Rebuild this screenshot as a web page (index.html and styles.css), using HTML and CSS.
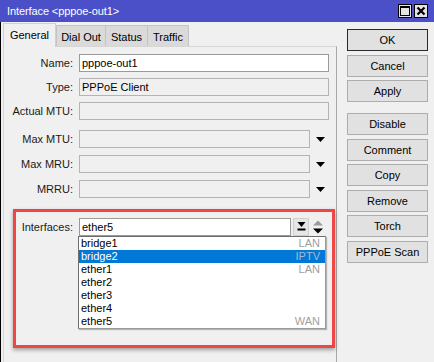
FILE: index.html
```html
<!DOCTYPE html>
<html lang="en">
<head>
    <meta charset="UTF-8">
    <title>Interface &lt;pppoe-out1&gt;</title>
    <link rel="stylesheet" href="styles.css">
</head>
<body>
    <div class="window">
        <div class="titlebar">
            <span class="title">Interface &lt;pppoe-out1&gt;</span>
            <div class="tb-buttons">
                <span class="tb-btn">
                    <svg width="10" height="10" viewBox="0 0 10 10"><rect x="0.5" y="0.5" width="9" height="9" fill="none" stroke="#000"/><rect x="0" y="0" width="10" height="2" fill="#000"/></svg>
                </span>
                <span class="tb-btn">
                    <svg width="10" height="10" viewBox="0 0 10 10"><path d="M1.5 1.5 L8.5 8.5 M8.5 1.5 L1.5 8.5" stroke="#000" stroke-width="2.2"/></svg>
                </span>
            </div>
        </div>
        <div class="content">
            <div class="left">
                <div class="tabs">
                    <div class="tab tab-general active">General</div>
                    <div class="tab tab-dial">Dial Out</div>
                    <div class="tab tab-status">Status</div>
                    <div class="tab tab-traffic">Traffic</div>
                </div>
                <div class="panel">
                    <div class="group">
                        <div class="row">
                            <span class="label">Name:</span>
                            <div class="field editable">pppoe-out1</div>
                        </div>
                        <div class="row">
                            <span class="label">Type:</span>
                            <div class="field">PPPoE Client</div>
                        </div>
                        <div class="row">
                            <span class="label">Actual MTU:</span>
                            <div class="field"></div>
                        </div>
                    </div>
                    <div class="group group-drop">
                        <div class="row">
                            <span class="label">Max MTU:</span>
                            <div class="field short"></div>
                            <svg class="drop" width="9" height="5" viewBox="0 0 9 5"><path d="M0 0 H9 L4.5 5 Z" fill="#000"/></svg>
                        </div>
                        <div class="row">
                            <span class="label">Max MRU:</span>
                            <div class="field short"></div>
                            <svg class="drop" width="9" height="5" viewBox="0 0 9 5"><path d="M0 0 H9 L4.5 5 Z" fill="#000"/></svg>
                        </div>
                        <div class="row">
                            <span class="label">MRRU:</span>
                            <div class="field short"></div>
                            <svg class="drop" width="9" height="5" viewBox="0 0 9 5"><path d="M0 0 H9 L4.5 5 Z" fill="#000"/></svg>
                        </div>
                    </div>

                    <div class="highlight">
                        <div class="row">
                            <span class="label label-if">Interfaces:</span>
                            <div class="field editable iface">ether5</div>
                            <span class="mini-btn">
                                <svg width="9" height="10" viewBox="0 0 9 10"><path d="M0.5 0 H8.5 L4.5 5 Z" fill="#000"/><rect x="0.5" y="6.5" width="8" height="2" fill="#000"/></svg>
                            </span>
                            <svg class="updown" width="10" height="14" viewBox="0 0 10 14"><path d="M0 5.5 L5 0.5 L10 5.5 Z" fill="#9a9a9a"/><path d="M0 8.5 H10 L5 13.5 Z" fill="#000"/></svg>
                        </div>
                        <ul class="list">
                            <li><span>bridge1</span><span class="tag">LAN</span></li>
                            <li class="selected"><span>bridge2</span><span class="tag">IPTV</span></li>
                            <li><span>ether1</span><span class="tag">LAN</span></li>
                            <li><span>ether2</span></li>
                            <li><span>ether3</span></li>
                            <li><span>ether4</span></li>
                            <li><span>ether5</span><span class="tag">WAN</span></li>
                        </ul>
                    </div>
                </div>
            </div>
            <div class="buttons">
                <button class="btn default">OK</button>
                <button class="btn">Cancel</button>
                <button class="btn">Apply</button>
                <button class="btn spaced">Disable</button>
                <button class="btn">Comment</button>
                <button class="btn">Copy</button>
                <button class="btn">Remove</button>
                <button class="btn">Torch</button>
                <button class="btn">PPPoE Scan</button>
            </div>
        </div>
    </div>
</body>
</html>
```

FILE: styles.css
```css
body {
    margin: 0;
    font-family: "Liberation Sans", Arial, sans-serif;
    font-size: 11px;
    color: #000;
    background: #f0f0f0;
}
.window {
    width: 434px;
    height: 362px;
    display: flex;
    flex-direction: column;
    overflow: hidden;
    background: #f0f0f0;
}
.titlebar {
    height: 22px;
    flex-shrink: 0;
    display: flex;
    align-items: center;
    justify-content: space-between;
    padding: 0 6px 0 7px;
    background: #4c50c8;
    color: #fff;
}
.title {
    font-size: 11px;
    letter-spacing: -0.1px;
}
.tb-buttons {
    display: flex;
    gap: 2px;
    margin-top: -1px;
}
.tb-btn {
    width: 12px;
    height: 12px;
    border: 1px solid #000;
    background: #e4e4e4;
    display: flex;
    align-items: center;
    justify-content: center;
}
.content {
    flex: 1;
    display: flex;
    border-left: 1px solid #000;
}
.left {
    width: 334px;
    padding-left: 2px;
    display: flex;
    flex-direction: column;
}
.tabs {
    height: 24px;
    display: flex;
    align-items: flex-end;
}
.tab {
    box-sizing: border-box;
    height: 21px;
    display: flex;
    align-items: center;
    justify-content: center;
    background: #dadada;
    border: 1px solid #c4c4c4;
    border-bottom: none;
    border-right: none;
    padding-top: 1px;
}
.tab-general { width: 53px; }
.tab-dial { width: 49px; }
.tab-status { width: 42px; }
.tab-traffic { width: 42px; border-right: 1px solid #c4c4c4; }
.tab.active {
    height: 24px;
    background: #f0f0f0;
    border-color: #d0d0d0;
    border-right: 1px solid #d0d0d0;
    margin-bottom: -1px;
    padding-bottom: 3px;
    position: relative;
    z-index: 1;
}
.panel {
    flex: 1;
    border: 1px solid #d6d6d6;
    border-right-color: #a8a8a8;
    border-bottom: none;
    padding-top: 7px;
}
.group {
    display: flex;
    flex-direction: column;
    gap: 6px;
}
.group-drop {
    margin-top: 10px;
    gap: 7px;
}
.row {
    display: flex;
    align-items: center;
    height: 18px;
}
.label {
    width: 69px;
    text-align: right;
    color: #1a1a1a;
}
.field {
    box-sizing: border-box;
    margin-left: 6px;
    width: 250px;
    height: 18px;
    line-height: 16px;
    padding-left: 2px;
    border: 1px solid #b4b4b4;
    background: #f0f0f0;
    white-space: nowrap;
}
.field.editable {
    background: #fff;
    border-color: #9a9a9a;
}
.field.short {
    width: 231px;
}
.drop {
    margin-left: 6px;
}
.highlight {
    box-sizing: border-box;
    width: 322px;
    margin: 11px 0 0 9px;
    padding: 6px 0 16px 0;
    border: 3px solid #ef4545;
    box-shadow: 0 2px 4px rgba(0, 0, 0, 0.35);
}
.label-if {
    width: 57px;
}
.field.iface {
    width: 212px;
}
.mini-btn {
    box-sizing: border-box;
    width: 16px;
    height: 18px;
    margin-left: 2px;
    display: flex;
    align-items: center;
    justify-content: center;
    background: #e6e6e6;
    border: 1px solid #cfcfcf;
}
.updown {
    margin-left: 4px;
}
.list {
    list-style: none;
    margin: 0 0 0 62px;
    padding: 0;
    width: 248px;
    box-sizing: border-box;
    border: 1px solid #6e6e6e;
    border-right-color: #9a9a9a;
    border-bottom-color: #9a9a9a;
    background: #fff;
    box-shadow: 1px 1px 1px rgba(0, 0, 0, 0.25);
}
.list li {
    height: 13px;
    line-height: 13px;
    display: flex;
    justify-content: space-between;
    padding: 0 5px 0 2px;
}
.list .tag {
    color: #a0a0a0;
}
.list li.selected {
    background: #0078d7;
    color: #fff;
}
.list li.selected .tag {
    color: #a9b9cf;
}
.buttons {
    width: 81px;
    margin-left: 10px;
    padding-top: 7px;
    display: flex;
    flex-direction: column;
    gap: 3.5px;
}
.btn {
    box-sizing: border-box;
    height: 22px;
    padding: 0;
    font-family: "Liberation Sans", Arial, sans-serif;
    font-size: 11px;
    color: #000;
    background: #e1e1e1;
    border: 1px solid #adadad;
}
.btn.default {
    border-color: #2a2a2a;
}
.btn.spaced {
    margin-top: 7.5px;
}
```
